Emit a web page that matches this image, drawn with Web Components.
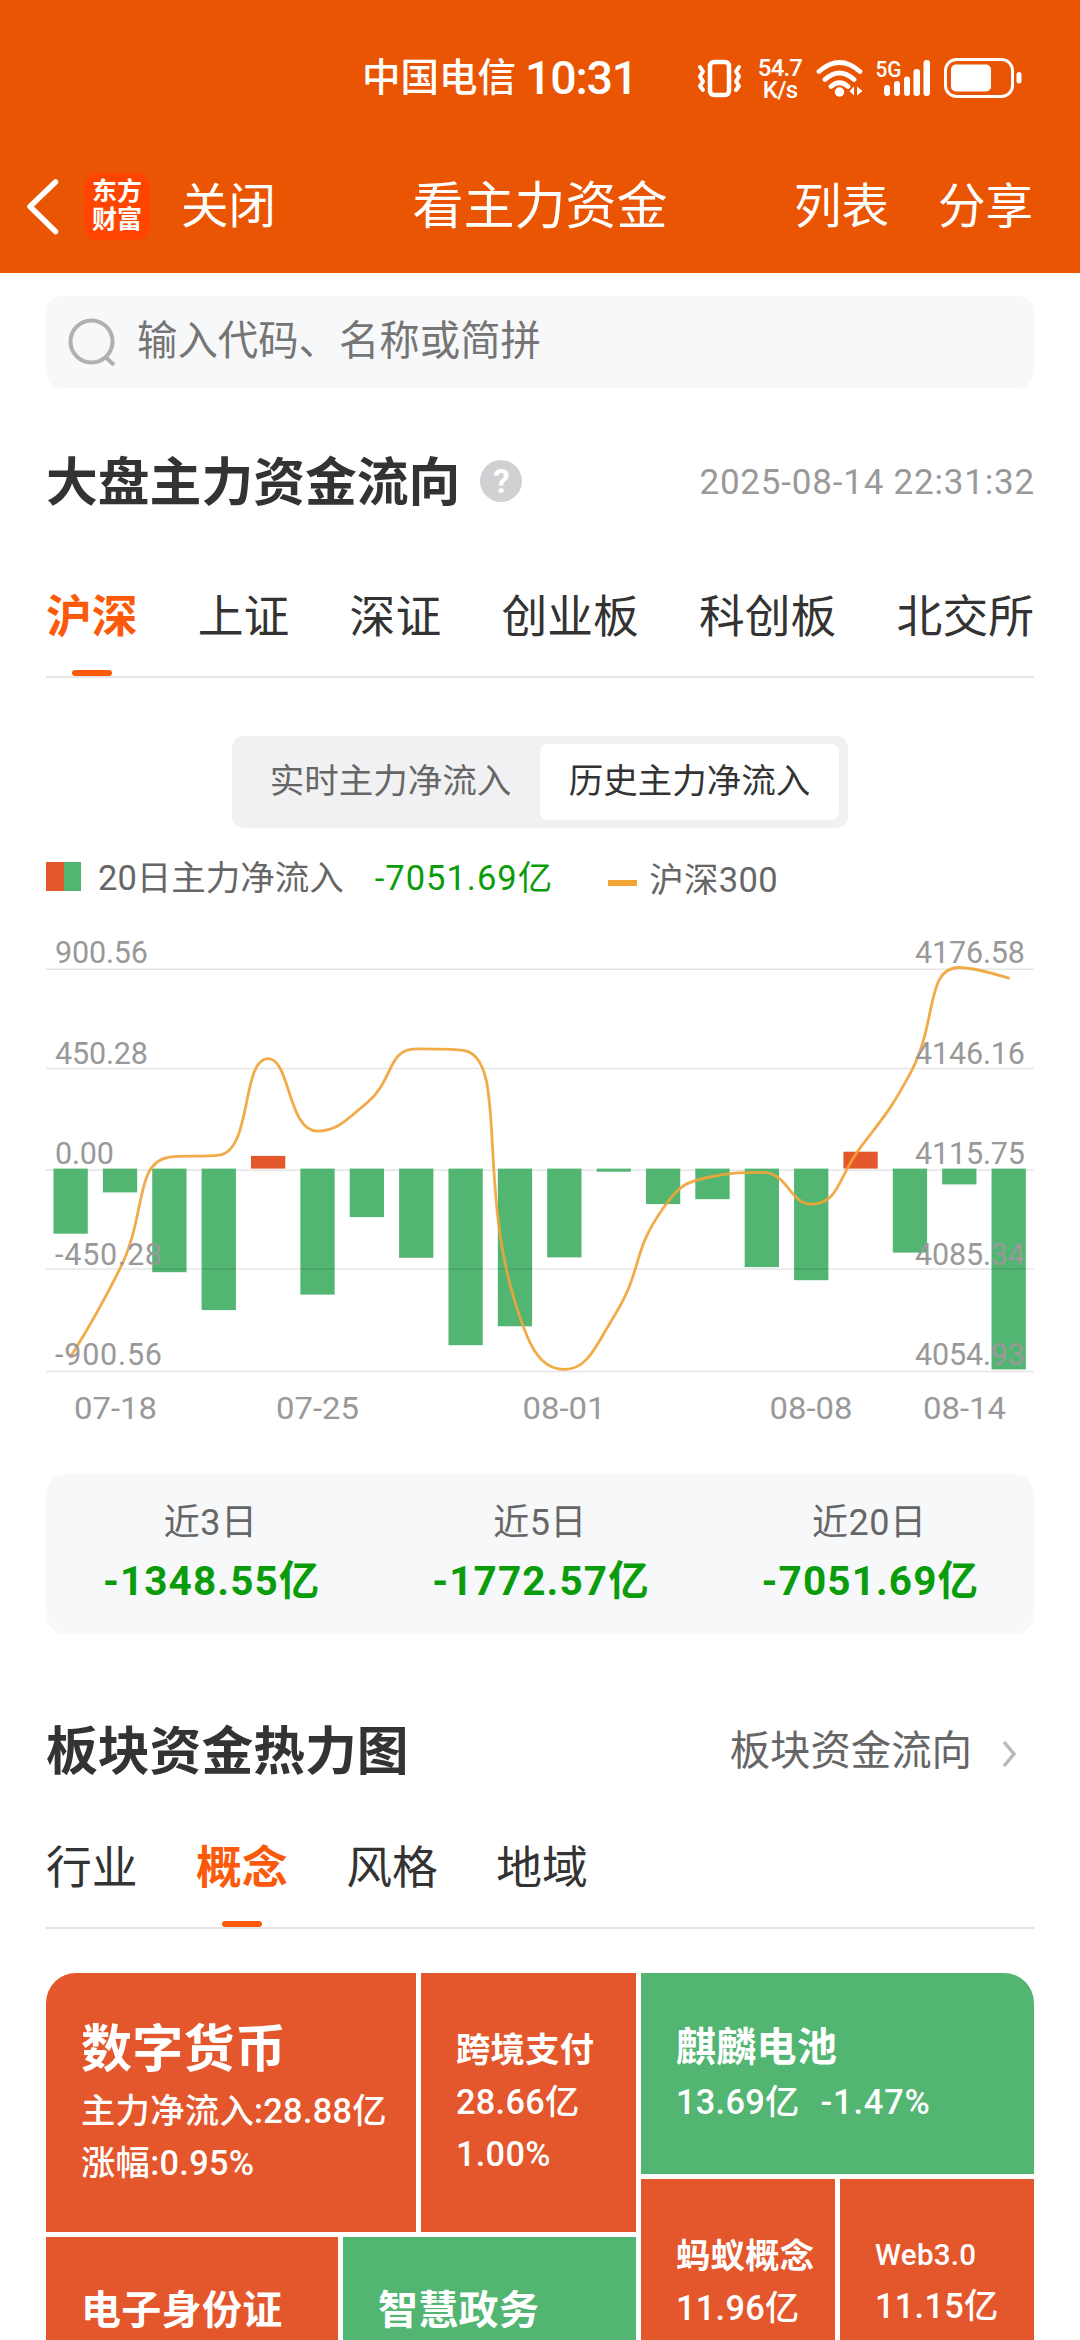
<!DOCTYPE html>
<html lang="zh-CN">
<head>
<meta charset="utf-8">
<title>看主力资金</title>
<style>
:root {
  --up: #e4572c;
  --down: #52b672;
  --brand: #fa5a0a;
  --text: #333;
  --sub: #666;
  --light: #999;
  --loss: #0a9c0a;
  --panel: #f7f8fa;
}
body {
  margin: 0;
  width: 1080px;
  height: 2340px;
  overflow: hidden;
  background: #fff;
  color: var(--text);
  font-family: Roboto, "Noto Sans CJK SC", sans-serif;
}
main {
  display: flex;
  flex-direction: column;
  padding: 23px 46px 0;
}
section-title { margin-top: 47px; }
tab-strip { margin-top: 60px; }
segment-switch { margin-top: 58px; }
chart-legend { margin-top: 28px; }
flow-summary { margin-top: 44px; }
.date { padding-top: 2px; font-size: 35px; color: var(--light); letter-spacing: .8px; margin-right: -1px; }
.link { padding-bottom: 5px; }
.sector { margin-top: 70px; }
.sector-tabs { margin-top: 42px; }
heat-map { margin-top: 44px; }
</style>
</head>
<body>
<status-bar></status-bar>
<nav-bar>看主力资金</nav-bar>
<main>
  <search-box>输入代码、名称或简拼</search-box>
  <section-title help>大盘主力资金流向<span slot="extra" class="date">2025-08-14 22:31:32</span></section-title>
  <tab-strip items="沪深,上证,深证,创业板,科创板,北交所" active="0" spread></tab-strip>
  <segment-switch items="实时主力净流入,历史主力净流入" active="1"></segment-switch>
  <chart-legend></chart-legend>
  <flow-chart></flow-chart>
  <flow-summary></flow-summary>
  <section-title class="sector" more>板块资金热力图<span slot="extra" class="link">板块资金流向</span></section-title>
  <tab-strip class="sector-tabs" items="行业,概念,风格,地域" active="1"></tab-strip>
  <heat-map></heat-map>
</main>

<script>
// Attach an open shadow root and fill it
function render(el, html) {
  el.attachShadow({ mode: 'open' }).innerHTML = html;
}

// Phone status bar
class StatusBar extends HTMLElement {
  constructor() {
    super();
    render(this, `
    <style>
    :host { display: flex; align-items: center; height: 104px; box-sizing: border-box; padding: 52px 0 0 362px; background: #ea5504; color: #fff; }
    .carrier { font-size: 38.500px; font-weight: 500; line-height: 54px; white-space: nowrap; }
    .time { font-size: 46.500px; font-weight: 500; line-height: 54px; letter-spacing: -1.200px; margin-left: 9px; width: 162px; flex: none; }
    .rate { display: grid; font-size: 24px; font-weight: 500; line-height: 22px; width: 48px; margin: 2px 0 0 12px; text-align: center; letter-spacing: -.800px; }
    svg { display: block; flex: none; }
    .vib { margin-left: 9px; }
    .wifi { margin-left: 11px; }
    .sig { margin-left: 9px; }
    .bat { margin-left: 9px; }
    </style>
    <span class="carrier">中国电信</span>
    <span class="time">10:31</span>
    <svg class="vib" width="48" height="52" viewBox="697 52 48 52" fill="none" stroke="#fff" stroke-linecap="round" stroke-linejoin="round">
      <rect x="711" y="62" width="19" height="33" rx="4" stroke-width="4.5"/>
      <path d="M701 67l3 4.500-3 5 3 5-3 4.500 3 4M740 67l-3 4.500 3 5-3 5 3 4.500-3 4" stroke-width="4"/>
    </svg>
    <div class="rate"><span>54.7</span><span>K/s</span></div>
    <svg class="wifi" width="50" height="52" viewBox="813 52 50 52" fill="none" stroke="#fff" stroke-width="4.800" stroke-linecap="round">
      <path d="M817 71.500Q837.500 53.500 858 71.500M823 79.500Q837.500 66.500 852 79.500M829 86.500Q837.500 79 846 86.500"/>
      <circle cx="837.500" cy="92" r="4.700" fill="#fff" stroke="none"/>
      <path d="M852 86.500v9l-4.500-4.500zM855 86.500v9l5.500-4.500z" fill="#fff" stroke="none"/>
    </svg>
    <svg class="sig" width="58" height="52" viewBox="873 52 58 52" fill="#fff">
      <text x="874.500" y="76.500" font-family="Roboto, sans-serif" font-size="22" font-weight="500" textLength="26" lengthAdjust="spacingAndGlyphs">5G</text>
      <rect x="883" y="85" width="6" height="11" rx="3"/>
      <rect x="893" y="81" width="6" height="15" rx="3"/>
      <rect x="903" y="76.500" width="6" height="19.500" rx="3"/>
      <rect x="912.500" y="69" width="6.500" height="27" rx="3"/>
      <rect x="922.500" y="60" width="6.500" height="36" rx="3"/>
    </svg>
    <svg class="bat" width="82" height="52" viewBox="940 52 82 52" fill="#fff">
      <rect x="944.500" y="59.500" width="67" height="37" rx="11" fill="none" stroke="#fff" stroke-width="3"/>
      <rect x="950" y="64.500" width="40" height="27" rx="5"/>
      <rect x="1015.500" y="72" width="5" height="11.500" rx="2.500"/>
    </svg>`);
  }
}

// Title bar with back, logo and actions
class NavBar extends HTMLElement {
  constructor() {
    super();
    render(this, `
    <style>
    :host { display: grid; grid-template-columns: 1fr auto 1fr; align-items: center; height: 169px; box-sizing: border-box; padding: 35px 25px 0; background: #ea5504; color: #fff; font-size: 47.500px; line-height: 66px; }
    .left { display: flex; align-items: center; }
    .logo { width: 66px; height: 67px; margin: 0 31px 0 24px; box-sizing: border-box; padding-top: 5px; border-radius: 14px; background: #ff4500; font-size: 25px; font-weight: 700; line-height: 28.500px; text-align: center; }
    .text { padding-top: 2px; }
    .title { padding-top: 2px; font-size: 51px; }
    .right { display: flex; justify-content: flex-end; gap: 49px; margin-right: 22px; padding-top: 2px; }
    </style>
    <div class="left">
      <svg width="35" height="60" viewBox="25 175 35 60" fill="none" stroke="#fff" stroke-width="5.500" stroke-linecap="round" stroke-linejoin="round"><path d="M55.500 181L30 205.500l25.500 25"/></svg>
      <div class="logo">东方<br>财富</div>
      <span class="text">关闭</span>
    </div>
    <span class="title"><slot></slot></span>
    <div class="right"><span>列表</span><span>分享</span></div>`);
  }
}

class SearchBox extends HTMLElement {
  constructor() {
    super();
    render(this, `
    <style>
    :host { display: flex; align-items: center; height: 92px; box-sizing: border-box; padding-left: 22px; border-radius: 16px; background: var(--panel); color: #757575; font-size: 40.400px; line-height: 90px; }
    svg { margin-right: 21px; }
    </style>
    <svg width="48" height="48" viewBox="0 0 48 48" fill="none" stroke="#b0b0b0" stroke-width="4"><circle cx="23.500" cy="23.500" r="21"/><path d="M37.500 39l8.500 8"/></svg>
    <span><slot></slot></span>`);
  }
}

class SectionTitle extends HTMLElement {
  constructor() {
    super();
    const help = this.hasAttribute('help');
    const more = this.hasAttribute('more');
    render(this, `
    <style>
    :host { display: flex; align-items: center; height: 92px; font-size: 51.800px; font-weight: 700; white-space: nowrap; }
    .name { padding-bottom: 6px; }
    .help { width: 42px; height: 42px; margin-left: 20px; border-radius: 50%; background: #d1d1d3; color: #fff; font-size: 33px; line-height: 43px; text-align: center; }
    .extra { display: flex; align-items: center; margin-left: auto; font-size: 40.400px; font-weight: 400; color: var(--sub); }
    svg { margin: 7px 16px 0 30px; }
    </style>
    <span class="name"><slot></slot></span>
    ${help ? '<span class="help">?</span>' : ''}
    <div class="extra"><slot name="extra"></slot>
    ${more ? '<svg width="16" height="26" viewBox="0 0 16 26" fill="none" stroke="#bbb" stroke-width="3.500"><path d="M2 1l10 12L2 25"/></svg>' : ''}
    </div>`);
  }
}

class TabStrip extends HTMLElement {
  constructor() {
    super();
    const active = Number(this.getAttribute('active'));
    const tabs = this.getAttribute('items').split(',')
      .map((t, i) => `<span class="tab${i === active ? ' on' : ''}">${t}</span>`).join('');
    render(this, `
    <style>
    :host { display: flex; gap: 58.500px; height: 91px; box-sizing: border-box; border-bottom: 2px solid #e5e5e5; font-size: 45.800px; line-height: 62px; }
    :host([spread]) { gap: 0; justify-content: space-between; }
    .tab { position: relative; }
    .on { color: var(--brand); font-weight: 700; }
    .on::after { content: ""; position: absolute; left: 50%; bottom: 0; width: 40px; height: 6px; margin-left: -20px; border-radius: 3px; background: var(--brand); }
    </style>${tabs}`);
  }
}

class SegmentSwitch extends HTMLElement {
  constructor() {
    super();
    const active = Number(this.getAttribute('active'));
    const items = this.getAttribute('items').split(',')
      .map((t, i) => `<span class="${i === active ? 'on' : ''}">${t}</span>`).join('');
    render(this, `
    <style>
    :host { display: grid; grid-template-columns: 1fr 1fr; align-self: center; width: 616px; height: 92px; box-sizing: border-box; padding: 8px 9px; border-radius: 12px; background: #f1f1f3; color: var(--sub); font-size: 34.500px; line-height: 74px; text-align: center; }
    .on { border-radius: 8px; background: #fff; color: var(--text); }
    </style>${items}`);
  }
}

class ChartLegend extends HTMLElement {
  constructor() {
    super();
    render(this, `
    <style>
    :host { display: flex; align-items: center; height: 44px; color: var(--sub); font-size: 34.500px; line-height: 46px; white-space: nowrap; }
    .box { width: 35px; height: 29px; margin: 0 17px 3px 0; background: linear-gradient(90deg, var(--up) 50%, var(--down) 50%); }
    .sum { margin: 0 55px 0 31px; color: var(--loss); letter-spacing: 1px; }
    .line { width: 29px; height: 6px; margin: 9px 12px 0 0; background: #f3a536; }
    .index { margin-top: 4px; letter-spacing: .300px; }
    </style>
    <i class="box"></i><span>20日主力净流入</span>
    <span class="sum">-7051.69亿</span>
    <i class="line"></i><span class="index">沪深300</span>`);
  }
}

// Bars: net inflow per day, line: index close
const zeroY = 1168.6;
const barEnds = [1233.7, 1192.4, 1272.2, 1310.1, 1155.9, 1294.6, 1217.1, 1257.8, 1345.2, 1326.3,
  1257.4, 1171.7, 1204.1, 1199.2, 1267.1, 1280.2, 1151.7, 1252.6, 1184.4, 1369.4];
const lineY = [1356.6, 1268.5, 1157.2, 1155.2, 1058.7, 1131.1, 1102.8, 1048.8, 1050.8, 1302.2,
  1369.4, 1316.7, 1208.2, 1176.5, 1172.4, 1204.1, 1147.2, 1073.9, 967.5, 978.2];

const clamp = (v, a, b) => Math.max(Math.min(a, b), Math.min(Math.max(a, b), v));

// Smooth path whose control points stay inside each segment
function smoothPath(pts, smooth) {
  let d = `M${pts[0]}`;
  let [c0x, c0y] = pts[0];
  for (let i = 1; i < pts.length; i++) {
    const [px, py] = pts[i - 1];
    const [x, y] = pts[i];
    let c1x = x, c1y = y, nx = x, ny = y;
    if (i < pts.length - 1) {
      const [qx, qy] = pts[i + 1];
      const lp = Math.hypot(x - px, y - py);
      const ln = Math.hypot(qx - x, qy - y);
      const r = ln / (ln + lp);
      nx = clamp(x + (qx - px) * smooth * r, x, qx);
      ny = clamp(y + (qy - py) * smooth * r, y, qy);
      c1x = clamp(x - (nx - x) * lp / ln, px, x);
      c1y = clamp(y - (ny - y) * lp / ln, py, y);
      nx = x + (x - c1x) * ln / lp;
      ny = y + (y - c1y) * ln / lp;
    }
    d += `C${c0x} ${c0y} ${c1x} ${c1y} ${x} ${y}`;
    c0x = nx;
    c0y = ny;
  }
  return d;
}

class FlowChart extends HTMLElement {
  constructor() {
    super();
    const gridY = [969.2, 1068.4, 1170.3, 1269.1, 1371.4];
    const baseY = [963, 1064, 1164, 1265, 1365];
    const left = ['900.56', '450.28', '0.00', '-450.28', '-900.56'];
    const leftW = [93, 93, 59, 107, 107];
    const right = ['4176.58', '4146.16', '4115.75', '4085.34', '4054.93'];
    const days = [['07-18', 115.5], ['07-25', 317.5], ['08-01', 564], ['08-08', 811], ['08-14', 964.5]];
    const rule = y => `<path class="grid" d="M46 ${y}H1033.500"/>`;
    const bars = barEnds.map((y, i) => `<rect class="${y < zeroY ? 'up' : 'down'}" x="${53.5 + 49.37 * i}" y="${Math.min(y, zeroY)}" width="34.300" height="${Math.abs(y - zeroY)}"/>`).join('');
    const line = smoothPath(lineY.map((y, i) => [70.7 + 49.37 * i, y]), 0.5);
    render(this, `
    <style>
    :host { display: block; height: 530px; }
    svg { display: block; }
    .grid { stroke: rgba(0, 0, 0, .1); stroke-width: 1.500; }
    .up { fill: var(--up); }
    .down { fill: var(--down); }
    .index { fill: none; stroke: #f0a43a; stroke-opacity: .92; stroke-width: 2.800; stroke-linecap: round; }
    text { fill: #999; font-size: 30.500px; }
    </style>
    <svg width="988" height="530" viewBox="46 900 988 530">
      ${rule(gridY[2])}
      ${bars}
      ${[0, 1, 3, 4].map(i => rule(gridY[i])).join('')}
      <path class="index" d="${line}"/>
      ${left.map((t, i) => `<text x="55" y="${baseY[i]}" textLength="${leftW[i]}">${t}</text>`).join('')}
      ${right.map((t, i) => `<text x="915" y="${baseY[i]}" textLength="110">${t}</text>`).join('')}
      ${days.map(([t, x]) => `<text x="${x - 41.5}" y="1418.500" textLength="83" lengthAdjust="spacingAndGlyphs">${t}</text>`).join('')}
    </svg>`);
  }
}

class FlowSummary extends HTMLElement {
  constructor() {
    super();
    const data = [['近3日', '-1348.55亿'], ['近5日', '-1772.57亿'], ['近20日', '-7051.69亿']];
    render(this, `
    <style>
    :host { display: grid; grid-template-columns: repeat(3, 1fr); height: 160px; box-sizing: border-box; padding-top: 20px; border-radius: 20px; background: var(--panel); text-align: center; }
    .day { font-size: 36px; line-height: 58px; color: var(--sub); letter-spacing: .500px; }
    .num { padding-left: 2px; font-size: 40.500px; line-height: 58px; font-weight: 700; color: var(--loss); letter-spacing: 1.100px; }
    </style>
    ${data.map(([d, n]) => `<div><div class="day">${d}</div><div class="num">${n}</div></div>`).join('')}`);
  }
}

// One block of the heat map, name in its own slot, figures below
class HeatTile extends HTMLElement {
  constructor() {
    super();
    render(this, `
    <style>
    :host { display: block; box-sizing: border-box; padding: var(--top, 0) 0 0 35px; background: var(--up); color: #fff; font-size: 34.300px; font-weight: 500; line-height: 52px; letter-spacing: .300px; white-space: nowrap; }
    :host([down]) { background: var(--down); }
    .name { font-size: var(--name, 34.3px); font-weight: var(--weight, 700); line-height: var(--lh, 52px); }
    </style>
    <div class="name"><slot name="name"></slot></div><slot></slot>`);
  }
}

class HeatMap extends HTMLElement {
  constructor() {
    super();
    render(this, `
    <style>
    :host { display: grid; grid-template-columns: 590px 393px; gap: 5px; height: 367px; border-radius: 30px 30px 0 0; overflow: hidden; }
    .col { display: flex; flex-direction: column; gap: 5px; }
    .row { display: flex; gap: 5px; }
    .grow { flex: 1; }
    </style>
    <div class="col">
      <div class="row" style="height:259px">
        <heat-tile style="width:370px;--top:42px;--name:51px;--lh:70px"><span slot="name">数字货币</span>主力净流入:28.88亿<br>涨幅:0.95%</heat-tile>
        <heat-tile class="grow" style="--top:51px"><span slot="name">跨境支付</span>28.66亿<br>1.00%</heat-tile>
      </div>
      <div class="row grow">
        <heat-tile style="width:292px;--top:44px;--name:40px;--lh:60px"><span slot="name">电子身份证</span></heat-tile>
        <heat-tile down class="grow" style="--top:44px;--name:40px;--lh:60px"><span slot="name">智慧政务</span></heat-tile>
      </div>
    </div>
    <div class="col">
      <div class="row" style="height:201px">
        <heat-tile down class="grow" style="--top:46px;--name:40px;--lh:57px"><span slot="name">麒麟电池</span>13.69亿<span style="margin-left:2px;letter-spacing:.9px">&nbsp; -1.47%</span></heat-tile>
      </div>
      <div class="row grow">
        <heat-tile style="width:194px;--top:51px"><span slot="name">蚂蚁概念</span>11.96亿</heat-tile>
        <heat-tile style="width:194px;--top:51px;--name:29.500px;--lh:50px;--weight:500"><span slot="name">Web3.0</span>11.15亿</heat-tile>
      </div>
    </div>`);
  }
}

customElements.define('status-bar', StatusBar);
customElements.define('nav-bar', NavBar);
customElements.define('search-box', SearchBox);
customElements.define('section-title', SectionTitle);
customElements.define('tab-strip', TabStrip);
customElements.define('segment-switch', SegmentSwitch);
customElements.define('chart-legend', ChartLegend);
customElements.define('flow-chart', FlowChart);
customElements.define('flow-summary', FlowSummary);
customElements.define('heat-tile', HeatTile);
customElements.define('heat-map', HeatMap);
</script>
</body>
</html>
